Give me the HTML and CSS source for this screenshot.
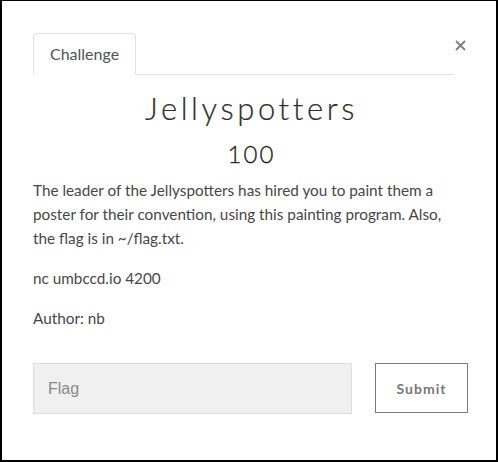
FILE: index.html
```
<!DOCTYPE html>
<html>
<head>
<meta charset="utf-8">
<link rel="stylesheet" href="styles.css">
</head>
<body>
<div class="frame">
  <div class="header">
    <div class="tabs">
      <div class="tab">Challenge</div>
    </div>
    <button class="close" aria-label="Close">
      <svg width="11" height="11" viewBox="0 0 11 11"><path d="M1 1L10 10M10 1L1 10" stroke="#7d7d7d" stroke-width="1.8" fill="none"/></svg>
    </button>
  </div>
  <h1 class="title">Jellyspotters</h1>
  <div class="points">100</div>
  <div class="desc">
    <p>The leader of the Jellyspotters has hired you to paint them a poster for their convention, using this painting program. Also, the flag is in ~/flag.txt.</p>
    <p>nc umbccd.io 4200</p>
    <p>Author: nb</p>
  </div>
  <form class="submit-row">
    <input class="flag-input" type="text" placeholder="Flag">
    <button class="submit" type="button">Submit</button>
  </form>
</div>
</body>
</html>
```
FILE: styles.css
```
html, body {
  margin: 0;
  padding: 0;
  background: #fff;
}
.frame {
  box-sizing: border-box;
  width: 498px;
  height: 462px;
  border: 2px solid #000;
  border-top-width: 1px;
  padding: 32px 26px 0 31px;
  font-family: Lato, "Liberation Sans", sans-serif;
  color: #474747;
}
.header {
  display: flex;
  align-items: flex-start;
}
.tabs {
  width: 421px;
  border-bottom: 1px solid #dee2e6;
  display: flex;
}
.tab {
  border: 1px solid #dee2e6;
  border-bottom-color: #fff;
  border-radius: 4px 4px 0 0;
  margin-bottom: -1px;
  padding: 8px 16px;
  font-size: 16px;
  line-height: 24px;
  color: #4e555b;
  background: #fff;
}
.close {
  margin: 7px 0 0 1px;
  padding: 0;
  width: 12px;
  height: 12px;
  border: 0;
  background: none;
  display: flex;
}
.title {
  margin: 15px 0 0;
  text-align: center;
  font-weight: 300;
  font-size: 31px;
  line-height: 37px;
  letter-spacing: 3.6px;
  color: #2e2e2e;
  -webkit-text-stroke: 0.2px #2e2e2e;
}
.points {
  margin-top: 12px;
  text-align: center;
  font-weight: 300;
  font-size: 24px;
  line-height: 29px;
  letter-spacing: 2px;
  color: #222;
  -webkit-text-stroke: 0.3px #222;
}
.desc {
  width: 421px;
  margin-top: 10px;
  font-size: 15.3px;
  line-height: 24px;
}
.desc p {
  margin: 0 0 16px;
}
.submit-row {
  display: flex;
  margin-top: 33px;
  gap: 23px;
  align-items: flex-start;
}
.flag-input {
  box-sizing: border-box;
  width: 319px;
  height: 51px;
  margin: 0;
  background: #f0f0f0;
  border: 1px solid #dcdcdc;
  padding: 0 14px;
  font-family: "Liberation Sans", Arial, sans-serif;
  font-size: 16px;
  color: #555;
  outline: none;
}
.flag-input::placeholder {
  color: #8a8a8a;
}
.submit {
  box-sizing: border-box;
  width: 93px;
  height: 50px;
  margin: 0;
  background: #fff;
  border: 1px solid #7a7a7a;
  font-family: Lato, sans-serif;
  font-weight: 700;
  font-size: 14px;
  letter-spacing: 1px;
  color: #777;
}
```
